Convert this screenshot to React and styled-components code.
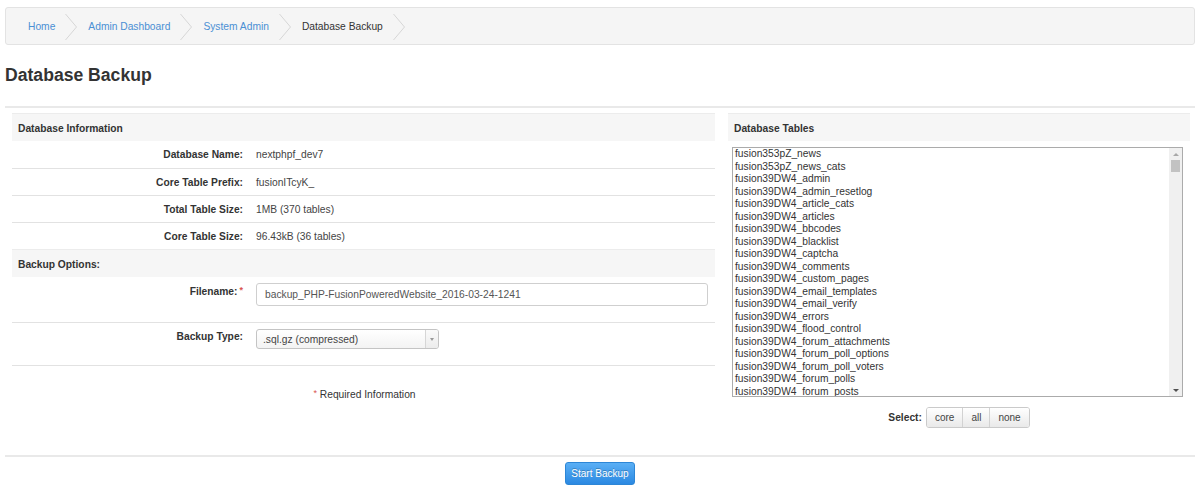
import React from "react";
import styled, { createGlobalStyle } from "styled-components";

const Global = createGlobalStyle`
  html, body { margin: 0; padding: 0; background: #fff; }
  body { font-family: "Liberation Sans", Arial, sans-serif; font-size: 10.25px; color: #333; }
  * { box-sizing: border-box; }
`;

const Page = styled.div`
  padding: 7px 5px 0 5px;
  width: 1200px;
`;

const Crumbs = styled.nav`
  display: flex;
  align-items: center;
  height: 38px;
  background: #f5f5f5;
  border: 1px solid #e3e3e3;
  border-radius: 3px;
  padding-left: 22px;
  padding-top: 1px;
`;

const Crumb = styled.a`
  color: ${(p) => (p.$active ? "#333" : "#4a8fd4")};
  text-decoration: none;
  font-size: 10.25px;
  line-height: 14px;
`;

const Chevron = styled.svg`
  display: block;
  margin: 0 11px 0 10px;
  flex: none;
`;

const Title = styled.h1`
  margin: 20px 0 0 0;
  font-size: 17.6px;
  line-height: 20px;
  font-weight: bold;
  color: #333;
`;

const Rule = styled.div`
  height: 2px;
  background: #e9e9e9;
  margin-top: ${(p) => p.$top}px;
`;

const Columns = styled.div`
  display: grid;
  grid-template-columns: 703px 462px;
  column-gap: 13px;
  padding-left: 7px;
  margin-top: 5px;
  height: 315px;
`;

const Panel = styled.section`
  display: flex;
  flex-direction: column;
`;

const PanelHead = styled.div`
  height: 28px;
  display: flex;
  align-items: center;
  padding-left: 6px;
  padding-top: 1px;
  background: #f6f6f6;
  border-top: 1px solid #ececec;
  font-weight: bold;
  font-size: 10.25px;
  color: #333;
`;

const InfoRow = styled.div`
  display: grid;
  grid-template-columns: 237px 1fr;
  height: 27px;
  padding-top: 1px;
  align-items: center;
  border-top: ${(p) => (p.$first ? "none" : "1px solid #e2e2e2")};
`;

const Label = styled.div`
  text-align: right;
  padding-right: 6px;
  font-weight: bold;
  color: #333;
  line-height: 14px;
  align-self: ${(p) => (p.$top ? "start" : "center")};
  padding-top: ${(p) => p.$pt || 0}px;
`;

const Value = styled.div`
  padding-left: 7px;
  color: #444;
  line-height: 14px;
`;

const FormRow = styled.div`
  display: grid;
  grid-template-columns: 237px 1fr;
  padding-top: 6px;
  padding-bottom: ${(p) => p.$pb}px;
  border-top: ${(p) => (p.$border ? "1px solid #e2e2e2" : "none")};
  border-bottom: ${(p) => (p.$bottom ? "1px solid #e2e2e2" : "none")};
`;

const Field = styled.div`
  padding-left: 7px;
  padding-right: 7px;
`;

const Star = styled.span`
  color: #d9534f;
  font-size: 9px;
  vertical-align: 2px;
  margin-left: 2px;
`;

const TextInput = styled.input`
  display: block;
  width: 100%;
  height: 23px;
  border: 1px solid #cfcfcf;
  border-radius: 3px;
  padding: 0 8px;
  font-family: "Liberation Sans", Arial, sans-serif;
  font-size: 10.25px;
  color: #555;
  background: #fff;
  outline: none;
`;

const SelectBox = styled.div`
  display: flex;
  width: 183px;
  height: 20px;
  border: 1px solid #c4c4c4;
  border-radius: 3px;
  background: linear-gradient(#ffffff, #f3f3f3);
  overflow: hidden;
`;

const SelectText = styled.div`
  flex: 1;
  display: flex;
  align-items: center;
  padding-left: 6px;
  font-size: 10.25px;
  color: #444;
`;

const SelectArrow = styled.div`
  width: 13px;
  border-left: 1px solid #d6d6d6;
  display: flex;
  align-items: center;
  justify-content: center;
  background: linear-gradient(#fafafa, #ececec);
  &::after {
    content: "";
    border-left: 2.5px solid transparent;
    border-right: 2.5px solid transparent;
    border-top: 3px solid #999;
  }
`;

const Required = styled.div`
  text-align: center;
  padding-top: 20px;
  line-height: 14px;
  color: #333;
`;

const ListWrap = styled.div`
  margin: 6px 7px 0 4px;
  height: 250px;
  border: 1px solid #ababab;
  display: flex;
  background: #fff;
`;

const List = styled.div`
  flex: 1;
  overflow: hidden;
  padding-left: 2px;
`;

const ListItem = styled.div`
  font-size: 10.25px;
  line-height: 12.5px;
  height: 12.5px;
  color: #333;
  white-space: nowrap;
`;

const Scrollbar = styled.div`
  width: 13px;
  background: #f0f0f0;
  display: flex;
  flex-direction: column;
  align-items: center;
`;

const ScrollArrow = styled.div`
  height: 12px;
  display: flex;
  align-items: center;
  justify-content: center;
  &::after {
    content: "";
    border-left: 3px solid transparent;
    border-right: 3px solid transparent;
    ${(p) =>
      p.$up
        ? "border-bottom: 3px solid #a8a8a8;"
        : "border-top: 3px solid #505050;"}
  }
`;

const Thumb = styled.div`
  width: 9px;
  height: 12px;
  background: #c2c2c2;
`;

const Track = styled.div`
  flex: 1;
`;

const SelectRow = styled.div`
  display: flex;
  align-items: center;
  justify-content: center;
  margin-top: 10px;
  gap: 4px;
`;

const SelectLabel = styled.span`
  font-weight: bold;
  color: #333;
`;

const BtnGroup = styled.div`
  display: flex;
  height: 21px;
  border: 1px solid #cacaca;
  border-radius: 3px;
  overflow: hidden;
`;

const GroupBtn = styled.button`
  border: none;
  border-left: ${(p) => (p.$first ? "none" : "1px solid #d2d2d2")};
  background: linear-gradient(#ffffff, #e9e9e9);
  padding: 0 ${(p) => p.$px}px;
  font-family: "Liberation Sans", Arial, sans-serif;
  font-size: 10px;
  color: #444;
  cursor: pointer;
`;

const Footer = styled.div`
  display: flex;
  justify-content: center;
  padding-top: 5px;
`;

const PrimaryBtn = styled.button`
  width: 70px;
  height: 23px;
  border: 1px solid #2d86d6;
  border-radius: 3px;
  background: linear-gradient(#5aaff5, #2b89e2);
  color: #fff;
  font-family: "Liberation Sans", Arial, sans-serif;
  font-size: 10px;
  text-shadow: 0 -1px 0 rgba(0, 0, 0, 0.25);
  padding: 0;
  cursor: pointer;
`;

const ChevronIcon = () => (
  <Chevron width="12" height="26" viewBox="0 0 12 26">
    <polyline points="0.5,0 11.5,13 0.5,26" fill="none" stroke="#d6d6d6" strokeWidth="1" />
  </Chevron>
);

const crumbs = [
  { label: "Home" },
  { label: "Admin Dashboard" },
  { label: "System Admin" },
  { label: "Database Backup", active: true },
];

const info = [
  ["Database Name:", "nextphpf_dev7"],
  ["Core Table Prefix:", "fusionITcyK_"],
  ["Total Table Size:", "1MB (370 tables)"],
  ["Core Table Size:", "96.43kB (36 tables)"],
];

const tables = [
  "fusion353pZ_news",
  "fusion353pZ_news_cats",
  "fusion39DW4_admin",
  "fusion39DW4_admin_resetlog",
  "fusion39DW4_article_cats",
  "fusion39DW4_articles",
  "fusion39DW4_bbcodes",
  "fusion39DW4_blacklist",
  "fusion39DW4_captcha",
  "fusion39DW4_comments",
  "fusion39DW4_custom_pages",
  "fusion39DW4_email_templates",
  "fusion39DW4_email_verify",
  "fusion39DW4_errors",
  "fusion39DW4_flood_control",
  "fusion39DW4_forum_attachments",
  "fusion39DW4_forum_poll_options",
  "fusion39DW4_forum_poll_voters",
  "fusion39DW4_forum_polls",
  "fusion39DW4_forum_posts",
];

export default function App() {
  return (
    <Page>
      <Global />
      <Crumbs>
        {crumbs.map((c) => (
          <React.Fragment key={c.label}>
            <Crumb href={c.active ? undefined : "#"} $active={c.active}>
              {c.label}
            </Crumb>
            <ChevronIcon />
          </React.Fragment>
        ))}
      </Crumbs>
      <Title>Database Backup</Title>
      <Rule $top={21} />
      <Columns>
        <Panel>
          <PanelHead>Database Information</PanelHead>
          {info.map(([k, v], i) => (
            <InfoRow key={k} $first={i === 0}>
              <Label>{k}</Label>
              <Value>{v}</Value>
            </InfoRow>
          ))}
          <PanelHead>Backup Options:</PanelHead>
          <FormRow $pb={16}>
            <Label $top $pt={0}>
              Filename:<Star>*</Star>
            </Label>
            <Field>
              <TextInput readOnly value="backup_PHP-FusionPoweredWebsite_2016-03-24-1241" />
            </Field>
          </FormRow>
          <FormRow $border $bottom $pb={16}>
            <Label $top $pt={1}>
              Backup Type:
            </Label>
            <Field>
              <SelectBox>
                <SelectText>.sql.gz (compressed)</SelectText>
                <SelectArrow />
              </SelectBox>
            </Field>
          </FormRow>
          <Required>
            <Star>*</Star> Required Information
          </Required>
        </Panel>
        <Panel>
          <PanelHead>Database Tables</PanelHead>
          <ListWrap>
            <List>
              {tables.map((t) => (
                <ListItem key={t}>{t}</ListItem>
              ))}
            </List>
            <Scrollbar>
              <ScrollArrow $up />
              <Thumb />
              <Track />
              <ScrollArrow />
            </Scrollbar>
          </ListWrap>
          <SelectRow>
            <SelectLabel>Select:</SelectLabel>
            <BtnGroup>
              <GroupBtn $first $px={8}>core</GroupBtn>
              <GroupBtn $px={8}>all</GroupBtn>
              <GroupBtn $px={8}>none</GroupBtn>
            </BtnGroup>
          </SelectRow>
        </Panel>
      </Columns>
      <Rule $top={27} />
      <Footer>
        <PrimaryBtn>Start Backup</PrimaryBtn>
      </Footer>
    </Page>
  );
}
